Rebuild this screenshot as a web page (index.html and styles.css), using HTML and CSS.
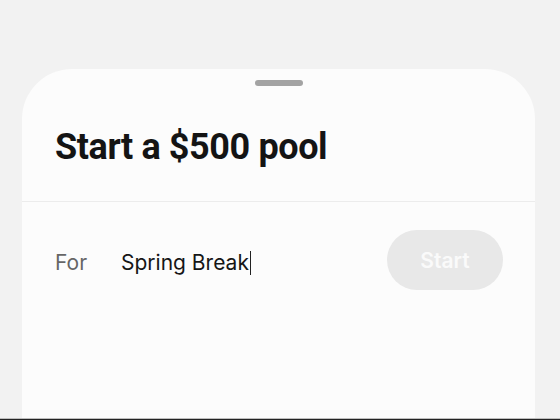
FILE: index.html
```html
<!DOCTYPE html>
<html>
<head>
<meta charset="utf-8">
<link rel="stylesheet" href="styles.css">
</head>
<body>
<div class="page">
  <div class="sheet">
    <div class="handle"></div>
    <h1 class="title">Start a $500 pool</h1>
    <div class="divider"></div>
    <div class="row">
      <span class="label">For</span>
      <span class="value">Spring Break<span class="caret"></span></span>
      <button class="start">Start</button>
    </div>
  </div>
  <div class="bottom"></div>
</div>
</body>
</html>
```
FILE: styles.css
```css
html, body {
  margin: 0;
  padding: 0;
  height: 100%;
}
body {
  background: #f2f2f2;
  font-family: Inter, "Noto Sans", sans-serif;
  color: #111;
}
.page {
  height: 420px;
  display: flex;
  flex-direction: column;
  padding-top: 69px;
  box-sizing: border-box;
}
.sheet {
  flex: 1;
  margin-left: 22px;
  width: 513px;
  background: #fcfcfc;
  border-radius: 50px 50px 0 0;
  display: flex;
  flex-direction: column;
}
.handle {
  align-self: center;
  width: 48px;
  height: 6px;
  border-radius: 3px;
  background: #a3a3a3;
  margin-top: 11px;
}
.title {
  margin: 39px 0 0 33px;
  font-family: Roboto, Inter, sans-serif;
  font-size: 36px;
  font-weight: 700;
  line-height: 44px;
  letter-spacing: -0.4px;
  color: #141414;
}
.divider {
  height: 1px;
  background: #ececec;
  margin-top: 32px;
}
.row {
  display: flex;
  align-items: center;
  padding: 28px 32px 0 33px;
}
.label {
  font-size: 21px;
  color: #666;
  width: 66px;
  padding-top: 5px;
}
.value {
  font-size: 21px;
  color: #161616;
  display: flex;
  align-items: center;
  padding-top: 5px;
}
.caret {
  display: inline-block;
  width: 1px;
  height: 24px;
  background: #222;
  margin-left: 1px;
}
.start {
  margin-left: auto;
  width: 116px;
  height: 60px;
  border: none;
  border-radius: 30px;
  background: #e8e8e8;
  color: #fafafa;
  font-family: Inter, "Noto Sans", sans-serif;
  font-size: 21px;
  font-weight: 600;
}
.bottom {
  height: 1px;
  background: #222;
  border-top: 1px solid #bdbdbd;
}
```
